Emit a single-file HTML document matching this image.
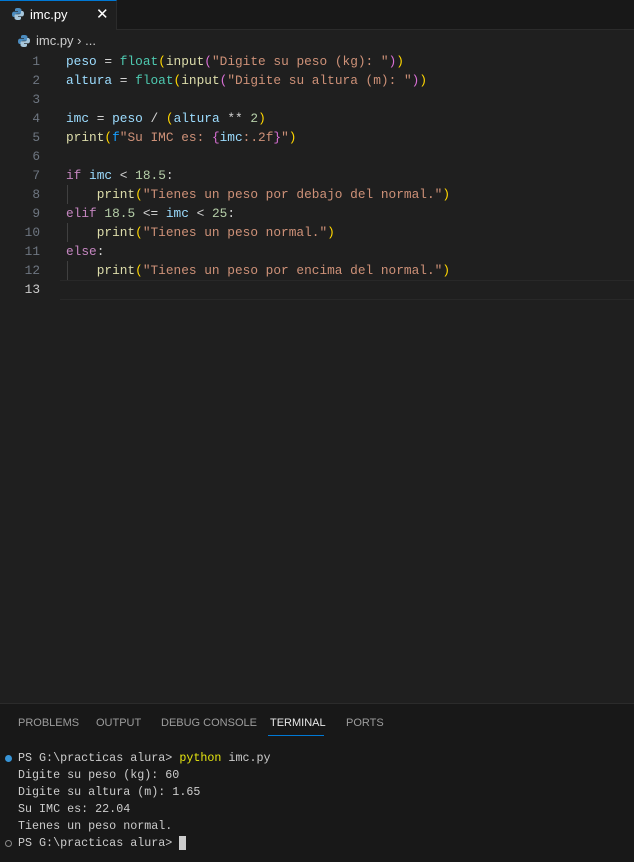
<!DOCTYPE html>
<html><head><meta charset="utf-8"><style>
body{margin:0;width:634px;height:861px;background:#1f1f1f;overflow:hidden;font-family:"Liberation Sans",sans-serif;position:relative}
.tabs{position:absolute;left:0;top:0;width:634px;height:30px;background:#181818;border-bottom:1px solid #2b2b2b;box-sizing:border-box}
.tab{position:absolute;left:0;top:0;width:117px;height:30px;background:#1f1f1f;border-right:1px solid #2b2b2b;border-top:1px solid #0078d4;box-sizing:border-box;color:#fff;font-size:13px}
.crumb{position:absolute;left:18px;top:33px;color:#ccc;font-size:13px}
.code{position:absolute;left:0;top:52px;font-family:"Liberation Mono",monospace;font-size:12.8px;line-height:19px;white-space:pre}
.ln{position:absolute;left:0;width:40px;text-align:right;color:#6e7681}
.tx{position:absolute;left:66px;color:#cccccc}
.v{color:#9cdcfe}.f{color:#dcdcaa}.c{color:#4ec9b0}.s{color:#ce9178}.n{color:#b5cea8}.k{color:#c586c0}.y{color:#ffd700}.p{color:#da70d6}.b{color:#179fff}.o{color:#d4d4d4}
.panel{position:absolute;left:0;top:703px;width:634px;height:158px;background:#181818;border-top:1px solid #2b2b2b}
.ptab{position:absolute;top:13px;font-size:11px;color:#9d9d9d}
.term{position:absolute;left:18px;top:46px;font-family:"Liberation Mono",monospace;font-size:11.7px;line-height:17px;white-space:pre;color:#cccccc}
</style></head><body>
<div class="tabs"><div class="tab">
<svg style="position:absolute;left:12px;top:7px" width="12" height="12" viewBox="0 0 12 12"><path d="M6 0C3 0 3 1 3 2v1h3v.6H2C0.5 3.6 0 5 0 6.5S.6 9 2 9h1V7.5C3 6.5 4 5.7 5 5.7h3c1 0 1.5-.6 1.5-1.5V2C9.5 1 8.5 0 6 0z" fill="#4b8bbe"/><path d="M6 12c3 0 3-1 3-2V9H6v-.6h4c1.5 0 2-1.4 2-2.9S11.4 3 10 3H9v1.5C9 5.5 8 6.3 7 6.3H4c-1 0-1.5.6-1.5 1.5V10C2.5 11 3.5 12 6 12z" fill="#a7c7dc"/></svg>
<span style="position:absolute;left:30px;top:6px">imc.py</span>
<span style="position:absolute;left:96px;top:4px;font-size:15px">✕</span></div></div>
<div class="crumb"><svg style="position:absolute;left:0;top:2px" width="12" height="12" viewBox="0 0 12 12"><path d="M6 0C3 0 3 1 3 2v1h3v.6H2C0.5 3.6 0 5 0 6.5S.6 9 2 9h1V7.5C3 6.5 4 5.7 5 5.7h3c1 0 1.5-.6 1.5-1.5V2C9.5 1 8.5 0 6 0z" fill="#4b8bbe"/><path d="M6 12c3 0 3-1 3-2V9H6v-.6h4c1.5 0 2-1.4 2-2.9S11.4 3 10 3H9v1.5C9 5.5 8 6.3 7 6.3H4c-1 0-1.5.6-1.5 1.5V10C2.5 11 3.5 12 6 12z" fill="#a7c7dc"/></svg><span style="margin-left:18px">imc.py › ...</span></div>
<div style="position:absolute;left:60px;top:280px;width:574px;height:18px;border-top:1px solid #282828;border-bottom:1px solid #282828"></div>
<div class="code">
<div class="ln" style="top:0">1</div><div class="tx" style="top:0"><span class="v">peso</span> <span class="o">=</span> <span class="c">float</span><span class="y">(</span><span class="f">input</span><span class="p">(</span><span class="s">"Digite su peso (kg): "</span><span class="p">)</span><span class="y">)</span></div>
<div class="ln" style="top:19px">2</div><div class="tx" style="top:19px"><span class="v">altura</span> <span class="o">=</span> <span class="c">float</span><span class="y">(</span><span class="f">input</span><span class="p">(</span><span class="s">"Digite su altura (m): "</span><span class="p">)</span><span class="y">)</span></div>
<div class="ln" style="top:38px">3</div>
<div class="ln" style="top:57px">4</div><div class="tx" style="top:57px"><span class="v">imc</span> <span class="o">=</span> <span class="v">peso</span> <span class="o">/</span> <span class="y">(</span><span class="v">altura</span> <span class="o">**</span> <span class="n">2</span><span class="y">)</span></div>
<div class="ln" style="top:76px">5</div><div class="tx" style="top:76px"><span class="f">print</span><span class="y">(</span><span class="b">f</span><span class="s">"Su IMC es: </span><span class="p">{</span><span class="v">imc</span><span class="s">:.2f</span><span class="p">}</span><span class="s">"</span><span class="y">)</span></div>
<div class="ln" style="top:95px">6</div>
<div class="ln" style="top:114px">7</div><div class="tx" style="top:114px"><span class="k">if</span> <span class="v">imc</span> <span class="o">&lt;</span> <span class="n">18.5</span><span class="o">:</span></div>
<div class="ln" style="top:133px">8</div><div class="tx" style="top:133px">    <span class="f">print</span><span class="y">(</span><span class="s">"Tienes un peso por debajo del normal."</span><span class="y">)</span></div>
<div class="ln" style="top:152px">9</div><div class="tx" style="top:152px"><span class="k">elif</span> <span class="n">18.5</span> <span class="o">&lt;=</span> <span class="v">imc</span> <span class="o">&lt;</span> <span class="n">25</span><span class="o">:</span></div>
<div class="ln" style="top:171px">10</div><div class="tx" style="top:171px">    <span class="f">print</span><span class="y">(</span><span class="s">"Tienes un peso normal."</span><span class="y">)</span></div>
<div class="ln" style="top:190px">11</div><div class="tx" style="top:190px"><span class="k">else</span><span class="o">:</span></div>
<div class="ln" style="top:209px">12</div><div class="tx" style="top:209px">    <span class="f">print</span><span class="y">(</span><span class="s">"Tienes un peso por encima del normal."</span><span class="y">)</span></div>
<div class="ln" style="top:228px;color:#ccc">13</div>
</div>
<div style="position:absolute;left:67px;top:185px;width:1px;height:19px;background:#404040"></div>
<div style="position:absolute;left:67px;top:223px;width:1px;height:19px;background:#404040"></div>
<div style="position:absolute;left:67px;top:261px;width:1px;height:19px;background:#404040"></div>
<div class="panel">
<span class="ptab" style="left:18px">PROBLEMS</span>
<span class="ptab" style="left:96px">OUTPUT</span>
<span class="ptab" style="left:161px">DEBUG CONSOLE</span>
<span class="ptab" style="left:270px;color:#e7e7e7">TERMINAL</span>
<div style="position:absolute;left:268px;top:31px;width:56px;height:1px;background:#0078d4"></div>
<span class="ptab" style="left:346px">PORTS</span>
<div style="position:absolute;left:5px;top:51px;width:7px;height:7px;border-radius:50%;background:#3794d6"></div>
<div style="position:absolute;left:5px;top:136px;width:5px;height:5px;border-radius:50%;border:1px solid #888"></div>
<div class="term">PS G:\practicas alura&gt; <span style="color:#e5e510">python</span> imc.py
Digite su peso (kg): 60
Digite su altura (m): 1.65
Su IMC es: 22.04
Tienes un peso normal.
PS G:\practicas alura&gt; <span style="background:#ccc"> </span></div>
</div>
</body></html>
